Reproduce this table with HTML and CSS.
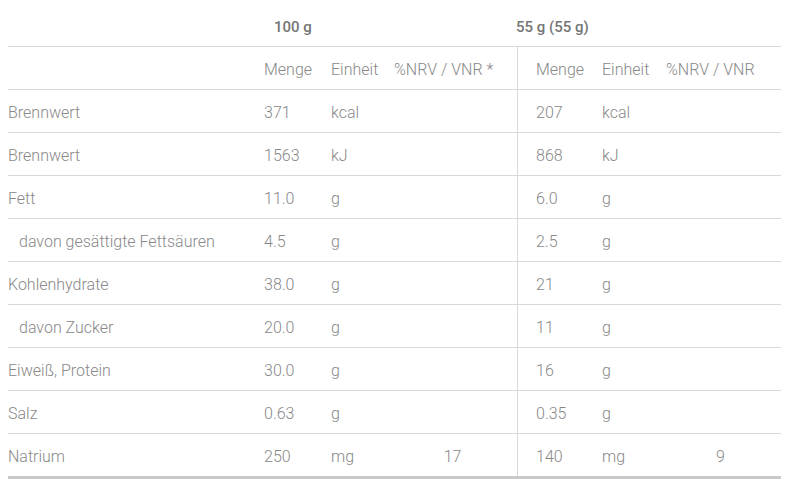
FILE: index.html
```html
<!DOCTYPE html>
<html lang="de">
<head>
<meta charset="utf-8">
<title>Nährwerte</title>
<link rel="stylesheet" href="styles.css">
</head>
<body>
<div class="table">
  <div class="row head">
    <div class="c-label"></div>
    <div class="group-head left">100 g</div>
    <div class="group-head right">55 g (55 g)</div>
  </div>
  <div class="row sub">
    <div class="c-label"></div>
    <div class="c-amt">Menge</div><div class="c-unit">Einheit</div><div class="c-nrv lefthead">%NRV / VNR *</div>
    <div class="c-amt2">Menge</div><div class="c-unit2">Einheit</div><div class="c-nrv2 righthead">%NRV / VNR</div>
  </div>
  <div class="row">
    <div class="c-label">Brennwert</div>
    <div class="c-amt">371</div><div class="c-unit">kcal</div><div class="c-nrv"></div>
    <div class="c-amt2">207</div><div class="c-unit2">kcal</div><div class="c-nrv2"></div>
  </div>
  <div class="row">
    <div class="c-label">Brennwert</div>
    <div class="c-amt">1563</div><div class="c-unit">kJ</div><div class="c-nrv"></div>
    <div class="c-amt2">868</div><div class="c-unit2">kJ</div><div class="c-nrv2"></div>
  </div>
  <div class="row">
    <div class="c-label">Fett</div>
    <div class="c-amt">11.0</div><div class="c-unit">g</div><div class="c-nrv"></div>
    <div class="c-amt2">6.0</div><div class="c-unit2">g</div><div class="c-nrv2"></div>
  </div>
  <div class="row">
    <div class="c-label indent">davon gesättigte Fettsäuren</div>
    <div class="c-amt">4.5</div><div class="c-unit">g</div><div class="c-nrv"></div>
    <div class="c-amt2">2.5</div><div class="c-unit2">g</div><div class="c-nrv2"></div>
  </div>
  <div class="row">
    <div class="c-label">Kohlenhydrate</div>
    <div class="c-amt">38.0</div><div class="c-unit">g</div><div class="c-nrv"></div>
    <div class="c-amt2">21</div><div class="c-unit2">g</div><div class="c-nrv2"></div>
  </div>
  <div class="row">
    <div class="c-label indent">davon Zucker</div>
    <div class="c-amt">20.0</div><div class="c-unit">g</div><div class="c-nrv"></div>
    <div class="c-amt2">11</div><div class="c-unit2">g</div><div class="c-nrv2"></div>
  </div>
  <div class="row">
    <div class="c-label">Eiweiß, Protein</div>
    <div class="c-amt">30.0</div><div class="c-unit">g</div><div class="c-nrv"></div>
    <div class="c-amt2">16</div><div class="c-unit2">g</div><div class="c-nrv2"></div>
  </div>
  <div class="row">
    <div class="c-label">Salz</div>
    <div class="c-amt">0.63</div><div class="c-unit">g</div><div class="c-nrv"></div>
    <div class="c-amt2">0.35</div><div class="c-unit2">g</div><div class="c-nrv2"></div>
  </div>
  <div class="row last">
    <div class="c-label">Natrium</div>
    <div class="c-amt">250</div><div class="c-unit">mg</div><div class="c-nrv">17</div>
    <div class="c-amt2">140</div><div class="c-unit2">mg</div><div class="c-nrv2">9</div>
  </div>
</div>
</body>
</html>
```
FILE: styles.css
```css
html, body {
  margin: 0;
  padding: 0;
  background: #ffffff;
}
body {
  padding: 8px 10px 0 8px;
  font-family: Roboto, "Liberation Sans", Arial, sans-serif;
  font-weight: 300;
  font-size: 16px;
  color: #888888;
}
.table {
  width: 773px;
}
.row {
  display: flex;
  align-items: center;
  height: 42px;
  border-bottom: 1px solid #d9d9d9;
}
.row.head {
  height: 38px;
}
.row.last {
  border-bottom: 3px solid #c9c9c9;
}
.c-label {
  width: 250px;
  flex: none;
  white-space: nowrap;
  padding-top: 2px;
}
.c-label.indent {
  padding-left: 11px;
  width: 239px;
}
.c-amt, .c-unit, .c-nrv, .c-amt2, .c-unit2, .c-nrv2 {
  flex: none;
  height: 100%;
  display: flex;
  align-items: center;
  padding-left: 6px;
  padding-top: 2px;
  box-sizing: border-box;
  white-space: nowrap;
}
.c-amt { width: 67px; }
.c-unit { width: 63px; }
.c-nrv { width: 129px; justify-content: center; padding-left: 0; }
.c-nrv.lefthead { justify-content: flex-start; padding-left: 6px; }
.c-amt2 { width: 79px; border-left: 1px solid #d9d9d9; padding-left: 18px; }
.c-unit2 { width: 64px; }
.c-nrv2 { width: 121px; justify-content: center; padding-left: 0; }
.c-nrv2.righthead { justify-content: flex-start; padding-left: 6px; }
.group-head {
  flex: none;
  font-weight: 500;
  font-size: 15px;
  color: #757575;
  white-space: nowrap;
}
.group-head.left {
  width: 258px;
  padding-left: 16px;
  box-sizing: border-box;
}
```
